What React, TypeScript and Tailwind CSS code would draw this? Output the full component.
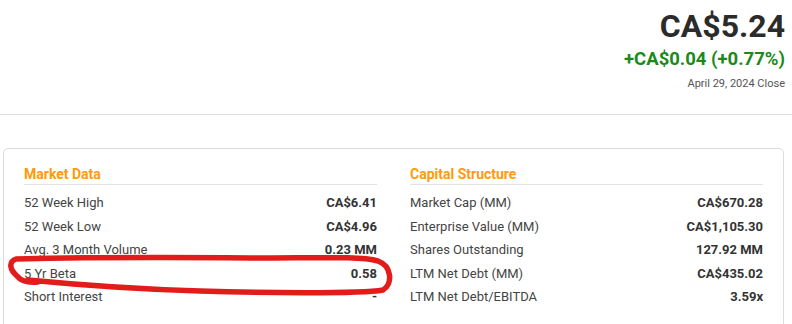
import React from "react";

const left: [string, string][] = [
  ["52 Week High", "CA$6.41"],
  ["52 Week Low", "CA$4.96"],
  ["Avg. 3 Month Volume", "0.23 MM"],
  ["5 Yr Beta", "0.58"],
  ["Short Interest", "-"],
];

const right: [string, string][] = [
  ["Market Cap (MM)", "CA$670.28"],
  ["Enterprise Value (MM)", "CA$1,105.30"],
  ["Shares Outstanding", "127.92 MM"],
  ["LTM Net Debt (MM)", "CA$435.02"],
  ["LTM Net Debt/EBITDA", "3.59x"],
];

function Section({ title, rows }: { title: string; rows: [string, string][] }) {
  return (
    <div className="flex flex-col">
      <div className="h-[21px] border-b border-[#e3e3e3] text-[14px] font-bold leading-[20px] text-[#ff9a0a]">
        {title}
      </div>
      <div className="flex flex-col pt-[6px]">
        {rows.map(([k, v]) => (
          <div key={k} className="flex h-[23.5px] items-center justify-between text-[13px]">
            <span className="text-[#444]">{k}</span>
            <span className="font-bold text-[#333]">{v}</span>
          </div>
        ))}
      </div>
    </div>
  );
}

export default function App() {
  return (
    <div
      className="relative h-[324px] w-[792px] overflow-hidden bg-white"
      style={{ fontFamily: "Roboto, 'Liberation Sans', sans-serif" }}
    >
      <div className="flex flex-col items-end pr-[7px] pt-[7px]">
        <div className="text-[32px] font-bold leading-[38px] text-[#2b2b2b]">CA$5.24</div>
        <div className="mt-[2px] text-[18.5px] font-bold leading-[24px] text-[#1b8a1b]">
          +CA$0.04 (+0.77%)
        </div>
        <div className="mt-[5px] text-[11px] leading-[16px] text-[#555]">April 29, 2024 Close</div>
      </div>
      <div className="mt-[22px] h-px w-full bg-[#dcdcdc]" />
      <div className="ml-[3px] mt-[33px] h-[200px] w-[781px] rounded-[5px] border border-[#dcdcdc] px-[20px] pt-[15px]">
        <div className="grid grid-cols-2 gap-x-[33px]">
          <Section title="Market Data" rows={left} />
          <Section title="Capital Structure" rows={right} />
        </div>
      </div>
      <svg className="pointer-events-none absolute left-0 top-0" width="792" height="324">
        <path
          d="M 38 282 C 28 283, 21 281, 17 276 C 10 270, 8 262, 16 259 C 60 258, 150 257, 250 258 C 320 258, 360 256, 378 261 C 392 266, 393 284, 383 290 C 360 294, 260 293, 200 291 C 130 289, 80 285, 28 280"
          fill="none"
          stroke="#e21b1b"
          strokeWidth="5.5"
          strokeLinecap="round"
          strokeLinejoin="round"
        />
      </svg>
    </div>
  );
}
